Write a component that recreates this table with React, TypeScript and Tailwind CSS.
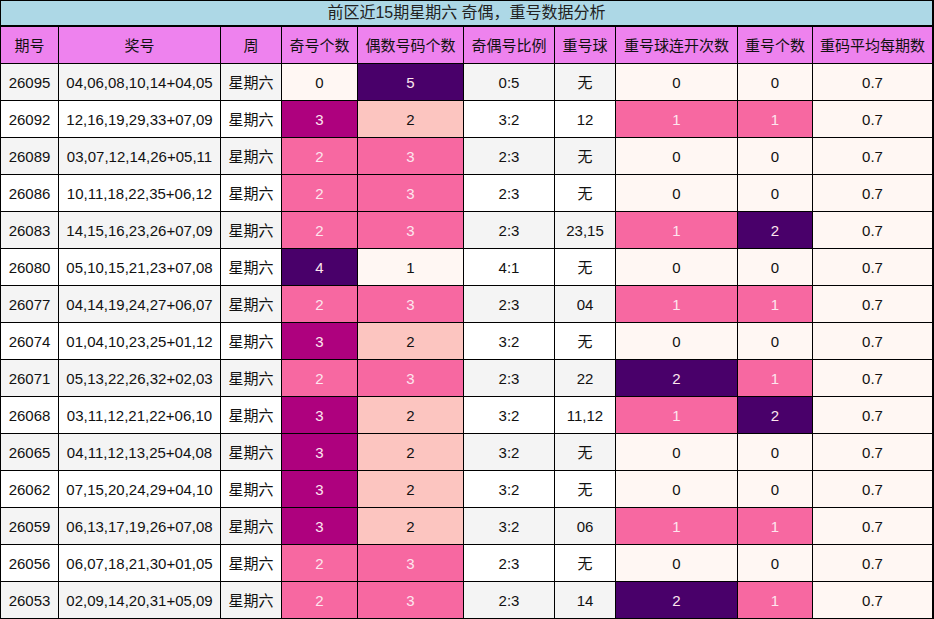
import React from "react";

type Row = [string, string, number, number, string, string, number, number];

const rows: Row[] = [
  ["26095", "04,06,08,10,14+04,05", 0, 5, "0:5", "无", 0, 0],
  ["26092", "12,16,19,29,33+07,09", 3, 2, "3:2", "12", 1, 1],
  ["26089", "03,07,12,14,26+05,11", 2, 3, "2:3", "无", 0, 0],
  ["26086", "10,11,18,22,35+06,12", 2, 3, "2:3", "无", 0, 0],
  ["26083", "14,15,16,23,26+07,09", 2, 3, "2:3", "23,15", 1, 2],
  ["26080", "05,10,15,21,23+07,08", 4, 1, "4:1", "无", 0, 0],
  ["26077", "04,14,19,24,27+06,07", 2, 3, "2:3", "04", 1, 1],
  ["26074", "01,04,10,23,25+01,12", 3, 2, "3:2", "无", 0, 0],
  ["26071", "05,13,22,26,32+02,03", 2, 3, "2:3", "22", 2, 1],
  ["26068", "03,11,12,21,22+06,10", 3, 2, "3:2", "11,12", 1, 2],
  ["26065", "04,11,12,13,25+04,08", 3, 2, "3:2", "无", 0, 0],
  ["26062", "07,15,20,24,29+04,10", 3, 2, "3:2", "无", 0, 0],
  ["26059", "06,13,17,19,26+07,08", 3, 2, "3:2", "06", 1, 1],
  ["26056", "06,07,18,21,30+01,05", 2, 3, "2:3", "无", 0, 0],
  ["26053", "02,09,14,20,31+05,09", 2, 3, "2:3", "14", 2, 1],
];

const headers = ["期号", "奖号", "周", "奇号个数", "偶数号码个数", "奇偶号比例", "重号球", "重号球连开次数", "重号个数", "重码平均每期数"];

const LIGHT = "bg-[#fff7f3] text-[#111]";
const LPINK = "bg-[#fcc5c0] text-[#111]";
const PINK = "bg-[#f768a1] text-[#fde6ee]";
const MAG = "bg-[#ae017e] text-[#fde6ee]";
const PURP = "bg-[#49006a] text-[#fde6ee]";

function oddCls(v: number) {
  if (v === 0 || v === 1) return LIGHT;
  if (v === 2) return PINK;
  if (v === 3) return MAG;
  return PURP;
}
function evenCls(v: number) {
  if (v === 0 || v === 1) return LIGHT;
  if (v === 2) return LPINK;
  if (v === 3) return PINK;
  return PURP;
}
function repCls(v: number) {
  if (v === 0) return LIGHT;
  if (v === 1) return PINK;
  return PURP;
}

const cell = "flex items-center justify-center whitespace-nowrap";

export default function App() {
  return (
    <div
      className="w-[934px] bg-black pt-px pl-px pr-[2px] pb-px text-[15px] leading-none text-[#111]"
      style={{ fontFamily: '"Liberation Sans", Arial, "Noto Sans CJK SC", sans-serif' }}
    >
      <div className="h-[24px] bg-[#add8e6] flex items-center justify-center text-[16px] text-[#222] mb-[2px]">
        前区近15期星期六 奇偶，重号数据分析
      </div>
      <div className="grid gap-px grid-cols-[57px_161px_60px_75px_105px_90px_60px_121px_74px_119px] auto-rows-[36px]">
        {headers.map((h) => (
          <div key={h} className={`${cell} bg-[#ee82ee] text-[#111]`}>
            {h}
          </div>
        ))}
        {rows.map((r, i) => {
          const base = i % 2 === 0 ? "bg-[#f4f4f4] text-[#111]" : "bg-white text-[#111]";
          return (
            <React.Fragment key={r[0]}>
              <div className={`${cell} ${base}`}>{r[0]}</div>
              <div className={`${cell} ${base}`}>{r[1]}</div>
              <div className={`${cell} ${base}`}>星期六</div>
              <div className={`${cell} ${oddCls(r[2])}`}>{r[2]}</div>
              <div className={`${cell} ${evenCls(r[3])}`}>{r[3]}</div>
              <div className={`${cell} ${base}`}>{r[4]}</div>
              <div className={`${cell} ${base}`}>{r[5]}</div>
              <div className={`${cell} ${repCls(r[6])}`}>{r[6]}</div>
              <div className={`${cell} ${repCls(r[7])}`}>{r[7]}</div>
              <div className={`${cell} ${LIGHT}`}>0.7</div>
            </React.Fragment>
          );
        })}
      </div>
    </div>
  );
}
